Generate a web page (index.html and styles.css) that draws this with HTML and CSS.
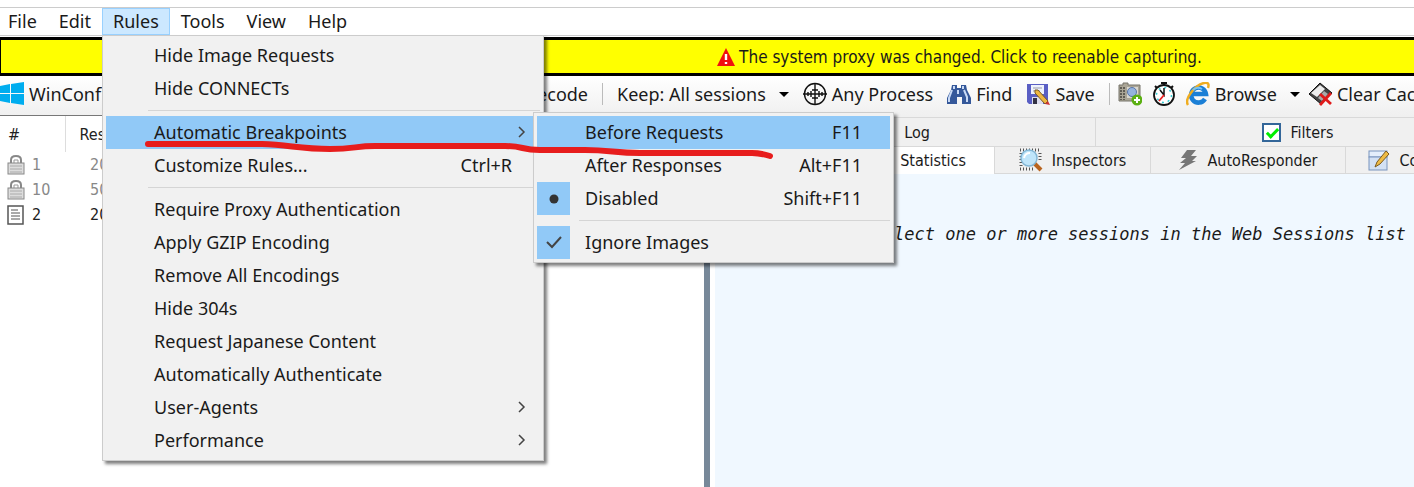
FILE: index.html
```
<!DOCTYPE html>
<html lang="en">
<head>
  <meta charset="UTF-8" />
  <meta name="viewport" content="width=device-width, initial-scale=1.0"/>
  <title>Web Debugger</title>
  <link rel="stylesheet" href="styles.css">
</head>
<body>

  <!-- Menu bar -->
  <nav class="menubar">
    <button>File</button>
    <button>Edit</button>
    <div class="menu-anchor">
      <button class="open">Rules</button>

      <!-- Rules menu -->
      <div class="menu">
        <button class="item"><span>Hide Image Requests</span></button>
        <button class="item"><span>Hide CONNECTs</span></button>
        <hr>
        <div class="menu-anchor">
          <button class="item active"><span>Automatic Breakpoints</span>
            <svg class="chevron" viewBox="0 0 8 12"><path d="M1 1l5 5-5 5"/></svg>
          </button>

          <!-- Breakpoints submenu -->
          <div class="menu submenu">
            <button class="item active"><span>Before Requests</span><kbd>F11</kbd></button>
            <button class="item"><span>After Responses</span><kbd>Alt+F11</kbd></button>
            <button class="item"><i class="mark"><svg viewBox="0 0 33 33"><circle cx="17" cy="17" r="4.5" fill="#333"/></svg></i><span>Disabled</span><kbd>Shift+F11</kbd></button>
            <hr>
            <button class="item"><i class="mark"><svg viewBox="0 0 33 33"><path d="M10 16l5 5 9-10" fill="none" stroke="#444" stroke-width="2"/></svg></i><span>Ignore Images</span></button>
          </div>
        </div>
        <button class="item"><span>Customize Rules...</span><kbd>Ctrl+R</kbd></button>
        <hr>
        <button class="item"><span>Require Proxy Authentication</span></button>
        <button class="item"><span>Apply GZIP Encoding</span></button>
        <button class="item"><span>Remove All Encodings</span></button>
        <button class="item"><span>Hide 304s</span></button>
        <button class="item"><span>Request Japanese Content</span></button>
        <button class="item"><span>Automatically Authenticate</span></button>
        <button class="item"><span>User-Agents</span>
          <svg class="chevron" viewBox="0 0 8 12"><path d="M1 1l5 5-5 5"/></svg>
        </button>
        <button class="item"><span>Performance</span>
          <svg class="chevron" viewBox="0 0 8 12"><path d="M1 1l5 5-5 5"/></svg>
        </button>
      </div>

      <!-- Red pen underline -->
      <svg class="pen" viewBox="0 0 640 24"><path d="M8 8H122C150 9 160 13 190 13C215 13 215 10 235 10H365C385 10 380 14 400 14H445C470 14 475 17 500 17H612Q620 17 630 20"/></svg>
    </div>
    <button>Tools</button>
    <button>View</button>
    <button>Help</button>
  </nav>

  <!-- Proxy warning -->
  <button class="banner">
    <svg width="18" height="18" viewBox="0 0 18 18"><path d="M9 0l9 18H0z" fill="#f01010"/><path d="M9 6v6M9 14v2" stroke="#fff" stroke-width="2.4"/></svg>
    The system proxy was changed. Click to reenable capturing.
  </button>

  <!-- Toolbar -->
  <div class="toolbar">
    <div class="toolbar-left">
      <button>
        <svg width="24" height="24" viewBox="0 0 24 24"><path d="M0 4l10-2v9H0zM11 2l13-2v11H11zM0 12h10v9L0 19zM11 12h13v11l-13-2z" fill="#00adef"/></svg>
        WinConfig
      </button>
      <button>Decode</button>
    </div>
    <i class="sep"></i>
    <button class="keep">Keep: All sessions <i class="caret"></i></button>
    <button>
      <svg width="24" height="24" viewBox="0 0 24 24" fill="none" stroke="#111" stroke-width="1.4"><circle cx="12" cy="12" r="10.500"/><path d="M0 12h24M12 1v22M8 9v6M16 9v6M9 8h6M9 16h6M5 10v4M19 10v4"/></svg>
      Any Process
    </button>
    <button>
      <svg width="24" height="24" viewBox="0 0 24 24"><path d="M5 3h5v3h4V3h5l1 5 4 8v6h-9v-7h-5v7H0v-6l4-8z" fill="#35589a"/><path d="M5 8l-3 8v4M17 8l3 7v5M7 4v3M16 4v3M11 8v4" stroke="#c9daf5" stroke-width="2" fill="none"/></svg>
      Find
    </button>
    <button>
      <svg width="24" height="24" viewBox="0 0 24 24"><path d="M1 2h21v20H3l-2-2z" fill="#5a5fc4"/><path d="M5 3h13v9H5z" fill="#eef2fc"/><path d="M6 15h11v7H6z" fill="#dde"/><path d="M7 16h4v6H7z" fill="#334"/><path d="M7 6h9M7 9h7" stroke="#99a" stroke-width="1"/><path d="M9 8l3 0 10 11-3 3-10-11z" fill="#edb641" stroke="#7b5b22"/><path d="M19 22l3-3 2 4z" fill="#c33"/></svg>
      Save
    </button>
    <i class="sep"></i>
    <button class="icon" aria-label="Screenshot">
      <svg width="24" height="24" viewBox="0 0 24 24"><path d="M1 3h4V1h5v2h12v16H1z" fill="#aaa596" stroke="#77746a"/><path d="M3 5v13M6 5v13" stroke="#5f5c54" stroke-dasharray="2 1" stroke-width="2"/><rect x="9" y="5" width="11" height="11" fill="#d9d7cf"/><circle cx="14" cy="10" r="4.5" fill="#95b3df" stroke="#5875a8"/><circle cx="19" cy="18" r="5.5" fill="#5bb012"/><path d="M19 15v6M16 18h6" stroke="#fff" stroke-width="2"/></svg>
    </button>
    <button class="icon" aria-label="Timer">
      <svg width="24" height="24" viewBox="0 0 24 24"><path d="M9 1h6M12 1v3M3 4l3 3M21 4l-3 3" stroke="#111" stroke-width="2"/><circle cx="12" cy="13" r="10" fill="#fff" stroke="#111" stroke-width="1.800"/><circle cx="12" cy="13" r="7.500" fill="none" stroke="#35cbd2" stroke-width="1.500" stroke-dasharray="2 3.890"/><path d="M8 8l4 5V6" stroke="#111" stroke-width="1.500" fill="none"/><path d="M12 13l-5 6" stroke="#e22" stroke-width="1.800"/></svg>
    </button>
    <button class="browse">
      <svg width="24" height="24" viewBox="0 0 24 24" fill="none"><path d="M19 17A7.500 7.500 0 1 1 20 12H7" stroke="#1b7fd6" stroke-width="4.500"/><path d="M2 23C-2 17 9 3 18 1c5-1 5 2 4 5" stroke="#efad21" stroke-width="2.500"/><path d="M7 8q4-4 9-1" stroke="#75c2f5" stroke-width="2"/></svg>
      Browse <i class="caret"></i>
    </button>
    <button class="clear">
      <svg width="26" height="24" viewBox="0 0 26 24"><path d="M12 1l12 10-11 11L1 12z" fill="#444" stroke="#111"/><path d="M12 3l5 4-8 8-6-4z" fill="#eee"/><path d="M10 16l6-7 4 3-6 7z" fill="#aaa"/><path d="M12 12l11 10M23 11L12 23" stroke="#e01b1b" stroke-width="2.800"/></svg>
      Clear Cache
    </button>
  </div>

  <div class="main">
    <!-- Session list -->
    <div class="sessions">
      <table>
        <thead>
          <tr><th class="num">#</th><th>Result</th></tr>
        </thead>
        <tbody>
          <tr>
            <td><svg width="18" height="20" viewBox="0 0 18 20"><path d="M4 9V5q0-4 5-4t5 4v4" fill="none" stroke="#888" stroke-width="2"/><path d="M7 8V5h4v3" fill="none" stroke="#999"/><rect x="1" y="8" width="16" height="11" fill="#ddd" stroke="#888"/><path d="M3 11h12M3 14h12M3 17h12" stroke="#aaa"/></svg>1</td>
            <td>200</td>
          </tr>
          <tr>
            <td><svg width="18" height="20" viewBox="0 0 18 20"><path d="M4 9V5q0-4 5-4t5 4v4" fill="none" stroke="#888" stroke-width="2"/><path d="M7 8V5h4v3" fill="none" stroke="#999"/><rect x="1" y="8" width="16" height="11" fill="#ddd" stroke="#888"/><path d="M3 11h12M3 14h12M3 17h12" stroke="#aaa"/></svg>10</td>
            <td>502</td>
          </tr>
          <tr class="plain">
            <td><svg width="18" height="20" viewBox="0 0 18 20"><rect x="1" y="1" width="15" height="18" fill="#fff" stroke="#555" stroke-width="1.500"/><path d="M4 5h7M4 8h9M4 11h9M4 14h9" stroke="#555"/></svg>2</td>
            <td>200</td>
          </tr>
        </tbody>
      </table>
    </div>

    <!-- Inspector side -->
    <div class="panel">
      <div class="tabs top">
        <button class="log"><svg width="20" height="20" viewBox="0 0 20 20"><rect x="2" y="1" width="16" height="18" fill="#fff" stroke="#222" stroke-width="2"/></svg>Log</button>
        <div class="tab"><input type="checkbox" id="filters" checked><label for="filters">Filters</label></div>
      </div>
      <div class="tabs">
        <button class="selected"><svg width="20" height="20" viewBox="0 0 20 20"><circle cx="10" cy="10" r="8" fill="#fff" stroke="#222" stroke-width="2"/></svg>Statistics</button>
        <button class="inspectors"><svg width="24" height="24" viewBox="0 0 24 24"><path d="M1 2h21M1 21h15M2 5v14M21 5v8" stroke="#555" stroke-width="3" stroke-dasharray="1 2"/><path d="M14 14l8 8" stroke="#b8641f" stroke-width="4"/><circle cx="10" cy="10" r="8" fill="#bfe5fa" stroke="#83b7d6" stroke-width="1.500"/><path d="M5 10q1-5 6-5" stroke="#fff" stroke-width="2" fill="none"/></svg>Inspectors</button>
        <button class="responder"><svg width="20" height="22" viewBox="0 0 20 22"><path d="M9 1h9l-5 6h6l-5 5h4L1 21l6-7H2l6-5H3z" fill="#777"/></svg>AutoResponder</button>
        <button class="composer"><svg width="22" height="22" viewBox="0 0 22 22"><rect x="1" y="2" width="18" height="6" fill="#e4eefb" stroke="#7894bd"/><rect x="1" y="8" width="18" height="13" fill="#d3e1f4" stroke="#7894bd"/><path d="M7 18l2-5L18 2l3 3-9 10z" fill="#eebb45" stroke="#7b5b22"/></svg>Composer</button>
      </div>
      <p class="hint">Please select one or more sessions in the Web Sessions list</p>
    </div>
  </div>

</body>
</html>
```
FILE: styles.css
```
* {
  box-sizing: border-box;
}

body {
  margin: 0;
  padding-top: 7px;
  height: 100vh;
  overflow: hidden;
  display: flex;
  flex-direction: column;
  background: white;
  color: #1a1a1a;
  font-family: "Noto Sans", "Open Sans", sans-serif;
  font-size: 18px;
}

button {
  margin: 0;
  padding: 0;
  border: none;
  background: none;
  color: inherit;
  font: inherit;
  white-space: nowrap;
}

svg {
  flex: none;
}

/* menu bar */
.menubar {
  display: flex;
  height: 29px;
  border-top: 1px solid #ccc;
  border-bottom: 1px solid #ccc;
}

.menubar > button,
.menubar .open {
  height: 27px;
  padding: 0 11px;
  line-height: 25px;
}

.menubar > button:first-child {
  padding-left: 8px;
}

.menubar .open {
  padding: 0 10px;
  background: #cce8ff;
  border: 1px solid #99d1ff;
}

.menu-anchor {
  position: relative;
}

/* drop-down menus */
.menu {
  position: absolute;
  z-index: 2;
  top: 27px;
  left: 0;
  width: 442px;
  padding: 3px;
  background: #f1f1f1;
  border: 1px solid #ccc;
  box-shadow: 3px 3px 3px rgba(0, 0, 0, 0.5);
}

.submenu {
  z-index: 3;
  top: -4px;
  left: 427px;
  width: 361px;
}

.menu .item {
  position: relative;
  display: flex;
  align-items: center;
  width: 100%;
  height: 33px;
  padding: 0 28px 2px 48px;
  text-align: left;
}

.menu .item span {
  flex: 1;
}

.menu .active {
  background: #91c9f7;
}

.menu kbd {
  font: inherit;
}

.menu hr {
  height: 1px;
  margin: 5px 0 5px 42px;
  border: none;
  background: #d5d5d5;
}

.chevron {
  width: 8px;
  height: 12px;
  margin-right: -14px;
  fill: none;
  stroke: #444;
  stroke-width: 1.5;
}

.mark {
  position: absolute;
  left: 0;
  top: 0;
  width: 33px;
  height: 33px;
  background: #91c9f7;
}

.pen {
  position: absolute;
  z-index: 4;
  top: 128px;
  left: 38px;
  width: 640px;
  height: 24px;
  fill: none;
  stroke: #e71d1d;
  stroke-width: 6;
  stroke-linecap: round;
  pointer-events: none;
}

/* warning banner */
.banner {
  display: flex;
  align-items: center;
  justify-content: center;
  gap: 4px;
  height: 39px;
  margin-top: 1px;
  padding-left: 504px;
  border: solid black;
  border-width: 3px 0 3px 1px;
  background: yellow;
  font: 17px "DejaVu Sans Condensed", "DejaVu Sans", sans-serif;
}

/* toolbar */
.toolbar {
  display: flex;
  align-items: center;
  height: 39px;
  padding-bottom: 3px;
  background: linear-gradient(white, #f0f0f0);
  overflow: hidden;
}

.toolbar button {
  display: flex;
  align-items: center;
  flex: none;
  gap: 5px;
  margin-right: 14px;
}

.toolbar-left {
  display: flex;
  flex: none;
  justify-content: space-between;
  width: 602px;
}

.sep {
  flex: none;
  width: 1px;
  height: 22px;
  margin-right: 8px;
  background: #bbb;
}

.caret {
  margin-left: 8px;
  border: 5px solid transparent;
  border-top-color: black;
  border-bottom: none;
}

.toolbar .keep {
  margin-left: 6px;
}

.toolbar .icon {
  margin-right: 10px;
}

.toolbar .browse {
  margin-right: 8px;
}

.toolbar .clear {
  gap: 3px;
}

/* main area */
.main {
  display: flex;
  flex: 1;
}

.sessions {
  flex: none;
  width: 704px;
  border-top: 1px solid #777;
  font: 16px "DejaVu Sans Condensed", "DejaVu Sans", sans-serif;
}

.sessions table {
  border-collapse: collapse;
  color: #888;
}

.sessions th {
  height: 36px;
  padding: 0 14px;
  border-left: 1px solid #ddd;
  color: #222;
  font-weight: normal;
  text-align: left;
}

.sessions th.num {
  width: 65px;
  padding: 0 8px;
  border: none;
}

.sessions td {
  height: 25px;
  padding: 0 0 0 25px;
}

.sessions td:first-child {
  display: flex;
  align-items: center;
  gap: 7px;
  padding-left: 7px;
}

.sessions .plain {
  color: #222;
}

.panel {
  flex: 1;
  min-width: 0;
  border-left: 6px solid #778899;
  background: #f0f8ff;
  box-shadow: inset 5px 0 white;
  overflow: hidden;
}

.tabs {
  display: flex;
  height: 28px;
  background: #f0f0f0;
  font: 16px "DejaVu Sans Condensed", "DejaVu Sans", sans-serif;
}

.tabs.top {
  height: 31px;
  border-top: 2px solid #f0f0f0;
}

.tabs > * {
  display: flex;
  flex: none;
  align-items: center;
  justify-content: center;
  gap: 9px;
  border: solid #d9d9d9;
  border-width: 1px 1px 1px 0;
}

.tabs.top > * {
  width: 405px;
  border-bottom: none;
}

.tabs.top .log {
  width: 386px;
}

.tabs .selected {
  width: 285px;
  padding-right: 28px;
  justify-content: flex-end;
  background: white;
  border-bottom: none;
}

.tabs .inspectors {
  width: 156px;
}

.tabs .responder {
  width: 195px;
}

.tabs .composer {
  width: 150px;
}

.tabs input {
  appearance: none;
  width: 19px;
  height: 19px;
  margin: 0;
  border: 2px solid #336699;
  background: white;
}

.tabs input:checked::after {
  content: "";
  display: block;
  width: 4px;
  height: 9px;
  margin: 1px 0 0 5px;
  border: solid #00ee00;
  border-width: 0 3px 3px 0;
  transform: rotate(45deg);
}

.hint {
  margin: 50px 0 0 92px;
  font: italic 17px "DejaVu Sans Mono", monospace;
  white-space: nowrap;
}
```
